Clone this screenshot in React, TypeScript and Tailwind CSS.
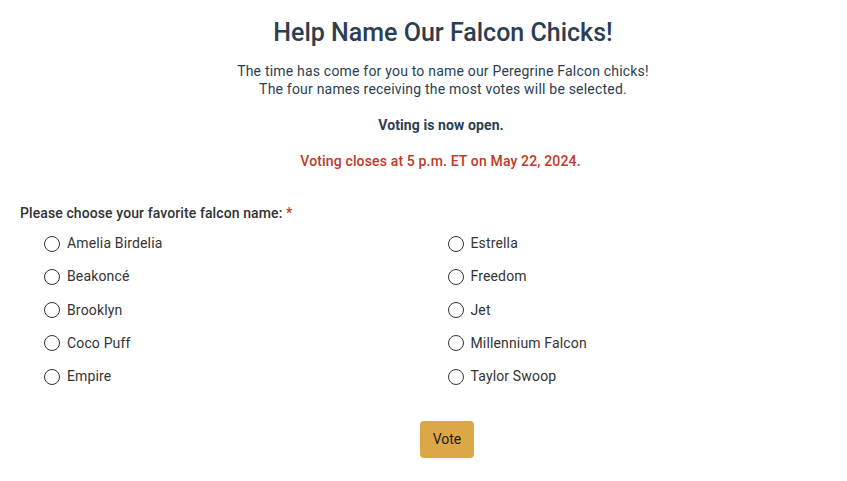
import React from "react";

const left = ["Amelia Birdelia", "Beakoncé", "Brooklyn", "Coco Puff", "Empire"];
const right = ["Estrella", "Freedom", "Jet", "Millennium Falcon", "Taylor Swoop"];

function Option({ name }: { name: string }) {
  return (
    <label className="flex items-center h-[33.25px] pl-[24px] gap-[7px] cursor-pointer">
      <span className="block w-[16px] h-[16px] rounded-full border-[1.5px] border-[#333333] bg-white shrink-0" />
      <span className="text-[14px] tracking-[0.15px] text-[#333333]">{name}</span>
    </label>
  );
}

export default function App() {
  return (
    <div className="w-[847px] h-[481px] bg-white px-[20px] text-[#2c3e50]" style={{ fontFamily: "Roboto, 'Liberation Sans', sans-serif" }}>
      <div className="pl-[39px] text-center">
        <h1 className="pt-[19px] text-[25px] leading-[28px] font-medium text-[#2c3e50]">Help Name Our Falcon Chicks!</h1>
        <p className="mt-[16px] text-[14px] leading-[17.5px] tracking-[0.2px] text-[#2c3e50]">
          The time has come for you to name our Peregrine Falcon chicks!
          <br />
          The four names receiving the most votes will be selected.
        </p>
        <p className="mt-[19px] mr-[4px] text-[14px] leading-[17px] tracking-[0.1px] font-bold text-[#2c3e50]">Voting is now open.</p>
        <p className="mt-[19px] mr-[5px] text-[14px] leading-[17px] tracking-[0.15px] font-medium text-[#c0392b]">Voting closes at 5 p.m. ET on May 22, 2024.</p>
      </div>
      <div className="mt-[35px] text-[14px] leading-[17px] tracking-[0.1px] font-medium text-[#333333]">
        Please choose your favorite falcon name: <span className="text-[#c0392b]">*</span>
      </div>
      <div className="mt-[5px] grid grid-cols-2">
        <div>
          {left.map((n) => (
            <Option key={n} name={n} />
          ))}
        </div>
        <div>
          {right.map((n) => (
            <Option key={n} name={n} />
          ))}
        </div>
      </div>
      <div className="flex justify-center pl-[47px] mt-[28px]">
        <button className="w-[54px] h-[37px] rounded-[4px] bg-[#dca847] text-[14px] text-[#1a1a1a]">Vote</button>
      </div>
    </div>
  );
}
